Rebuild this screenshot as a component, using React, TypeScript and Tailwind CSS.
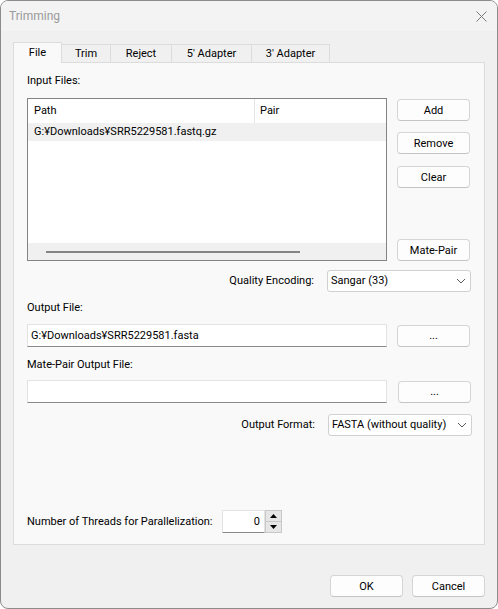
import React from 'react';

const font = "font-['Roboto','Noto_Sans',sans-serif]";

// Win11-style push button
const Btn = ({ label, className = '' }: { label: string; className?: string }) => (
  <button
    className={`h-[22px] w-[73px] rounded-[4px] border border-[#d5d5d5] border-b-[#c4c4c4] bg-[#fdfdfd] text-[11px] leading-none text-black ${className}`}
  >
    {label}
  </button>
);

const Chevron = () => (
  <svg width="10" height="6" viewBox="0 0 10 6" className="shrink-0">
    <path d="M1 1 L5 5 L9 1" fill="none" stroke="#5a5a5a" strokeWidth="1" />
  </svg>
);

const Select = ({ value, className = '' }: { value: string; className?: string }) => (
  <div
    className={`flex h-[22px] w-[144px] items-center justify-between whitespace-nowrap rounded-[3px] border border-[#d0d0d0] bg-white pl-[3px] pr-[4px] ${className}`}
  >
    <span>{value}</span>
    <Chevron />
  </div>
);

const TextBox = ({ value }: { value: string }) => (
  <div className="flex h-[23px] w-[360px] items-center border border-[#e3e3e3] border-b-[#8a8a8a] bg-white pl-[3px]">
    {value}
  </div>
);

const tabs = ['File', 'Trim', 'Reject', "5' Adapter", "3' Adapter"];
const tabWidths = ['w-[49px]', 'w-[49px]', 'w-[61px]', 'w-[80px]', 'w-[78px]'];

export default function App() {
  return (
    <div
      className={`flex h-[609px] w-[498px] flex-col overflow-hidden rounded-[8px] border border-[#8c8c8c] bg-[#f0f0f0] text-[11px] leading-[16px] text-black ${font}`}
    >
      {/* Title bar */}
      <div className="flex h-[30px] shrink-0 items-center justify-between bg-[#f3f3f3] pl-[8px] pr-[10px]">
        <span className="text-[12px] text-[#9a9a9a]">Trimming</span>
        <svg width="11" height="11" viewBox="0 0 11 11">
          <path d="M0.5 0.5 L10.5 10.5 M10.5 0.5 L0.5 10.5" stroke="#7a7a7a" strokeWidth="1" />
        </svg>
      </div>

      <div className="flex flex-1 flex-col px-[12px] pt-[11px]">
        {/* Tabs */}
        <div className="flex h-[20px] items-end">
          {tabs.map((t, i) =>
            i === 0 ? (
              <div
                key={t}
                className={`relative z-10 -mb-px flex h-[21px] ${tabWidths[i]} items-start justify-center border-x border-t border-[#dcdcdc] bg-[#f9f9f9] pt-[2px]`}
              >
                {t}
              </div>
            ) : (
              <div
                key={t}
                className={`flex h-[18px] ${tabWidths[i]} items-center justify-center border-r border-t border-[#dcdcdc] bg-[#f0f0f0] pt-px`}
              >
                {t}
              </div>
            )
          )}
        </div>

        {/* Tab panel */}
        <div className="flex h-[483px] flex-col border border-[#dcdcdc] bg-[#f9f9f9] px-[13px] pt-[10px]">
          <div>Input Files:</div>

          <div className="mt-[9px] flex gap-[10px]">
            {/* List view */}
            <div className="flex h-[163px] w-[360px] flex-col border border-[#848484] bg-white">
              <div className="flex h-[24px] shrink-0 items-center">
                <div className="flex h-full w-[227px] items-center border-r border-[#e5e5e5] pl-[6px]">Path</div>
                <div className="pl-[5px]">Pair</div>
              </div>
              <div className="flex h-[18px] items-center bg-[#f0f0f0] pl-[6px]">G:¥Downloads¥SRR5229581.fastq.gz</div>
              <div className="flex-1" />
              <div className="flex h-[17px] items-center bg-[#f0f0f0] pl-[18px]">
                <div className="h-[2px] w-[254px] bg-[#858585]" />
              </div>
            </div>

            {/* Buttons */}
            <div className="flex flex-col pt-px">
              <Btn label="Add" />
              <Btn label="Remove" className="mt-[11px]" />
              <Btn label="Clear" className="mt-[12px]" />
              <Btn label="Mate-Pair" className="mt-auto" />
            </div>
          </div>

          <div className="mt-[9px] flex items-center justify-end gap-[13px]">
            <span>Quality Encoding:</span>
            <Select value="Sangar (33)" />
          </div>

          <div className="mt-[8px]">Output File:</div>
          <div className="mt-[8px] flex items-center gap-[10px]">
            <TextBox value="G:¥Downloads¥SRR5229581.fasta" />
            <Btn label="..." />
          </div>

          <div className="mt-[10px]">Mate-Pair Output File:</div>
          <div className="mt-[7px] flex items-center gap-[11px]">
            <TextBox value="" />
            <Btn label="..." />
          </div>

          <div className="mr-[-1px] mt-[11px] flex items-center justify-end gap-[13px]">
            <span>Output Format:</span>
            <Select value="FASTA (without quality)" className="h-[21px]" />
          </div>

          <div className="mt-[74px] flex items-center">
            <span className="w-[195px] whitespace-nowrap">Number of Threads for Parallelization:</span>
            <div className="flex items-center">
              <div className="flex h-[23px] w-[43px] items-center justify-end border border-[#e3e3e3] border-b-[#8a8a8a] bg-white pr-[4px]">
                0
              </div>
              <div className="flex h-[23px] w-[17px] flex-col border border-[#c8c8c8] bg-[#f0f0f0]">
                <div className="flex flex-1 items-center justify-center border-b border-[#c8c8c8] bg-[#e6e6e6]">
                  <svg width="7" height="4" viewBox="0 0 7 4">
                    <path d="M0 4 L3.5 0 L7 4 Z" fill="#000" />
                  </svg>
                </div>
                <div className="flex flex-1 items-center justify-center bg-[#e6e6e6]">
                  <svg width="7" height="4" viewBox="0 0 7 4">
                    <path d="M0 0 L3.5 4 L7 0 Z" fill="#000" />
                  </svg>
                </div>
              </div>
            </div>
          </div>
        </div>

        {/* Dialog buttons */}
        <div className="mt-[30px] flex justify-end gap-[9px]">
          <Btn label="OK" />
          <Btn label="Cancel" />
        </div>
      </div>
    </div>
  );
}
